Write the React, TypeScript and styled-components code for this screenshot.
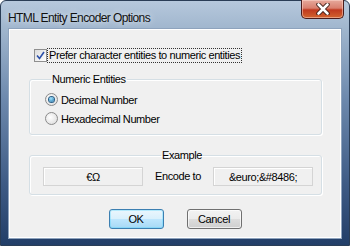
import React from "react";
import styled, { createGlobalStyle } from "styled-components";

const Global = createGlobalStyle`
  html, body { margin: 0; padding: 0; background: #fff; }
  body { width: 350px; height: 246px; overflow: hidden; }
`;

const Window = styled.div`
  width: 350px;
  height: 246px;
  box-sizing: border-box;
  display: flex;
  flex-direction: column;
  border-radius: 6px 6px 0 0;
  border: 1px solid #2a3d56;
  background: linear-gradient(180deg, #b6c8dc 0%, #9fb5cd 12%, #6d89ad 40%, #3e5b85 75%, #223e68 100%);
  font-family: "Liberation Sans", Arial, sans-serif;
`;

const TitleBar = styled.div`
  height: 27px;
  display: flex;
  align-items: flex-start;
  justify-content: space-between;
`;

const Title = styled.span`
  font-family: "Liberation Sans", Arial, sans-serif;
  font-size: 12px;
  letter-spacing: -0.6px;
  color: #111;
  padding: 10px 0 0 7px;
  text-shadow: 0 0 6px rgba(255, 255, 255, 0.9);
`;

const CloseButton = styled.div`
  width: 43px;
  height: 19px;
  margin: -1px 5px 0 0;
  box-sizing: border-box;
  border: 1px solid #4a1c1c;
  border-top: none;
  border-radius: 0 0 5px 5px;
  background: linear-gradient(180deg, #e6a99c 0%, #d97f6e 45%, #c0391f 55%, #d2642e 100%);
  box-shadow: inset 0 0 0 1px rgba(255, 220, 210, 0.5);
  display: flex;
  align-items: center;
  justify-content: center;
`;

const Client = styled.div`
  flex: 1;
  margin: 0 7px 6px 7px;
  background: #f0f0f0;
  border: 1px solid #8ea3bd;
  box-shadow: inset 0 0 0 1px #ffffff;
  display: flex;
  flex-direction: column;
  padding: 19px 19px 0 20px;
  font-size: 11px;
  letter-spacing: -0.4px;
  color: #000;
`;

const CheckRow = styled.label`
  display: flex;
  align-items: center;
  height: 15px;
  margin-left: 5px;
`;

const CheckBox = styled.span`
  width: 11px;
  height: 11px;
  border: 1px solid #8f8f8f;
  background: linear-gradient(135deg, #dcdcdc, #ffffff);
  display: flex;
  align-items: center;
  justify-content: center;
  margin-right: 1px;
`;

const FocusText = styled.span`
  outline: 1px dotted #333;
  padding: 0 1px;
  line-height: 13px;
`;

const Group = styled.fieldset`
  margin: 0;
  padding: 0;
  min-width: 0;
  border: 1px solid #d5dfe5;
  border-radius: 3px;
  box-shadow: inset 1px 1px 0 #fff, 1px 1px 0 #fff;
`;

const NumericGroup = styled(Group)`
  margin-top: 10px;
  height: 62px;
  box-sizing: border-box;
  padding: 7px 0 0 15px;
  display: flex;
  flex-direction: column;
  gap: 6px;
`;

const Legend = styled.legend<{ $center?: boolean }>`
  padding: 0 1px;
  margin-left: ${(p) => (p.$center ? "auto" : "6px")};
  margin-right: ${(p) => (p.$center ? "auto" : "0")};
  line-height: 13px;
`;

const RadioRow = styled.label`
  display: flex;
  align-items: center;
  gap: 3px;
  height: 13px;
`;

const Radio = styled.span<{ $checked?: boolean }>`
  width: 11px;
  height: 11px;
  border-radius: 50%;
  border: 1px solid #8b8b8b;
  background: radial-gradient(circle at 40% 40%, #ffffff, #d8d8d8);
  display: flex;
  align-items: center;
  justify-content: center;
  &::after {
    content: "";
    display: ${(p) => (p.$checked ? "block" : "none")};
    width: 5px;
    height: 5px;
    border-radius: 50%;
    background: radial-gradient(circle at 40% 35%, #9fe3ff, #1d6ea3);
    box-shadow: 0 0 0 1px #2a5e86;
  }
`;

const ExampleGroup = styled(Group)`
  margin-top: 14px;
  height: 46px;
  box-sizing: border-box;
  padding: 5px 0 0 13px;
  display: flex;
  align-items: flex-start;
`;

const Field = styled.div`
  width: 100px;
  height: 19px;
  box-sizing: border-box;
  border: 1px solid #d4d4d4;
  box-shadow: inset 1px 1px 0 #fff;
  background: #f0f0f0;
  display: flex;
  align-items: center;
  justify-content: center;
`;

const EncodeLabel = styled.span`
  width: 70px;
  text-align: center;
  line-height: 19px;
`;

const ButtonRow = styled.div`
  display: flex;
  justify-content: center;
  gap: 23px;
  margin-top: 14px;
  padding-right: 1px;
`;

const Button = styled.button<{ $default?: boolean }>`
  width: 55px;
  height: 20px;
  box-sizing: border-box;
  border-radius: 3px;
  border: 1px solid ${(p) => (p.$default ? "#3c7fb1" : "#707070")};
  background: ${(p) =>
    p.$default
      ? "linear-gradient(180deg, #eaf6fd 0%, #d9f0fc 50%, #bee6fd 51%, #a7d9f5 100%)"
      : "linear-gradient(180deg, #f2f2f2 0%, #ebebeb 50%, #dddddd 51%, #cfcfcf 100%)"};
  box-shadow: inset 0 0 0 1px ${(p) => (p.$default ? "#48d3fb55" : "#ffffffaa")};
  font-family: "Liberation Sans", Arial, sans-serif;
  font-size: 11px;
  letter-spacing: -0.4px;
  color: #000;
  padding: 0;
`;

export default function App() {
  return (
    <>
      <Global />
      <Window>
        <TitleBar>
          <Title>HTML Entity Encoder Options</Title>
          <CloseButton>
            <svg width="14" height="12" viewBox="0 0 14 12">
              <path d="M2.5 1.5 L11.5 10.5 M11.5 1.5 L2.5 10.5" stroke="#3a1a14" strokeWidth="4.4" strokeLinecap="round" />
              <path d="M2.5 1.5 L11.5 10.5 M11.5 1.5 L2.5 10.5" stroke="#ffffff" strokeWidth="2.6" strokeLinecap="round" />
            </svg>
          </CloseButton>
        </TitleBar>
        <Client>
          <CheckRow>
            <CheckBox>
              <svg width="9" height="9" viewBox="0 0 9 9">
                <path d="M1 4.5 L3.5 7.5 L8 1" fill="none" stroke="#2b4fa8" strokeWidth="1.6" />
              </svg>
            </CheckBox>
            <FocusText>Prefer character entities to numeric entities</FocusText>
          </CheckRow>
          <NumericGroup>
            <Legend>Numeric Entities</Legend>
            <RadioRow>
              <Radio $checked />
              Decimal Number
            </RadioRow>
            <RadioRow>
              <Radio />
              Hexadecimal Number
            </RadioRow>
          </NumericGroup>
          <ExampleGroup>
            <Legend $center>Example</Legend>
            <Field>€Ω</Field>
            <EncodeLabel>Encode to</EncodeLabel>
            <Field>&amp;euro;&amp;#8486;</Field>
          </ExampleGroup>
          <ButtonRow>
            <Button $default>OK</Button>
            <Button>Cancel</Button>
          </ButtonRow>
        </Client>
      </Window>
    </>
  );
}
